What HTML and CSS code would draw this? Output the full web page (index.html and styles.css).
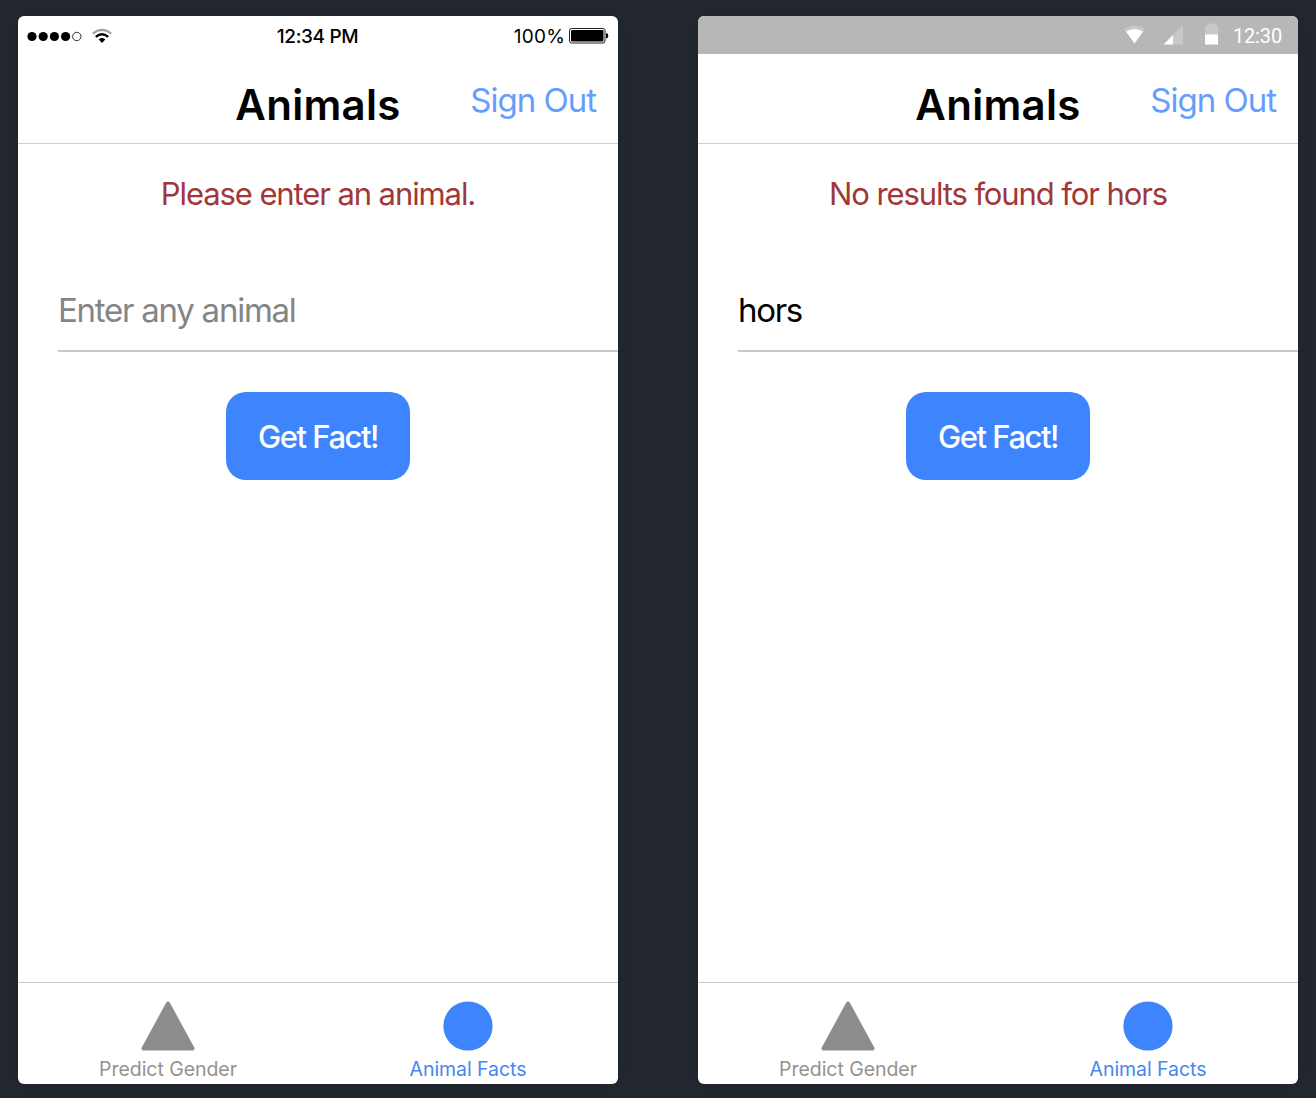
FILE: index.html
```html
<!DOCTYPE html>
<html lang="en">
<head>
<meta charset="utf-8">
<title>Animals</title>
<link rel="stylesheet" href="styles.css">
</head>
<body>
<main class="stage">
  <section class="phone">
    <div class="status status-ios">
      <svg class="signal" width="86" height="20" viewBox="0 0 86 20">
        <circle cx="5" cy="10.5" r="4.6"/><circle cx="16.2" cy="10.5" r="4.6"/><circle cx="27.4" cy="10.5" r="4.6"/><circle cx="38.6" cy="10.5" r="4.6"/>
        <circle cx="49.8" cy="10.5" r="4.2" fill="#fff" stroke="#000" stroke-width=".8"/>
        <path d="M65.8 7.6Q75 .2 84.2 7.6" fill="none" stroke="#a0a0a0" stroke-width="2.2"/>
        <path d="M68.8 10.8Q75 5.6 81.2 10.8" fill="none" stroke="#000" stroke-width="2.4"/>
        <path d="M71.7 13.5Q75 10.6 78.3 13.5L75 16.9Z"/>
      </svg>
      <span class="clock">12:34 PM</span>
      <span class="power"><span class="percent">100%</span>
        <svg width="40" height="16" viewBox="0 0 40 16">
          <rect x=".5" y=".5" width="35.5" height="14.5" rx="2" fill="#fff" stroke="#222"/>
          <rect x="2" y="2" width="32.5" height="11.5" rx="1"/>
          <path d="M37 5Q39.3 5.3 39.3 7.8T37 10.5Z"/>
        </svg>
      </span>
    </div>
    <header class="header"><h1 class="title">Animals</h1><a class="signout">Sign Out</a></header>
    <div class="content">
      <p class="message">Please enter an animal.</p>
      <div class="field placeholder">Enter any animal</div>
      <button class="submit">Get Fact!</button>
    </div>
    <nav class="tabs">
      <a class="tab"><svg width="54" height="50" viewBox="0 0 54 50"><path d="M27 2.5L51.5 47.5H2.5Z" fill="#8c8c8c" stroke="#8c8c8c" stroke-width="4" stroke-linejoin="round"/></svg><span>Predict Gender</span></a>
      <a class="tab active"><svg width="54" height="50" viewBox="0 0 54 50"><circle cx="27" cy="25" r="24.6" fill="#3e84fd"/></svg><span>Animal Facts</span></a>
    </nav>
  </section>
  <section class="phone">
    <div class="status status-android">
      <svg width="96" height="22" viewBox="0 0 96 22">
        <path d="M0 4Q10.5-3 21 4L10.5 18.5Z" fill="#c8c8c8"/><path d="M2 6.4Q10.5 1.4 19 6.4L10.5 18.5Z" fill="#fff"/>
        <path d="M39.5 19.5H59V0Z" fill="#c8c8c8"/><path d="M39.5 19.5H49V10Z" fill="#fff"/>
        <path d="M81 19.5V2Q81 0 83 0H84.5V-1.5H90.5V0H92Q94 0 94 2V19.5Z" fill="#c8c8c8"/><path d="M81 9.5H94V19.5H81Z" fill="#fff"/>
      </svg>
      <span class="android-clock">12:30</span>
    </div>
    <header class="header"><h1 class="title">Animals</h1><a class="signout">Sign Out</a></header>
    <div class="content">
      <p class="message">No results found for hors</p>
      <div class="field value">hors</div>
      <button class="submit">Get Fact!</button>
    </div>
    <nav class="tabs">
      <a class="tab"><svg width="54" height="50" viewBox="0 0 54 50"><path d="M27 2.5L51.5 47.5H2.5Z" fill="#8c8c8c" stroke="#8c8c8c" stroke-width="4" stroke-linejoin="round"/></svg><span>Predict Gender</span></a>
      <a class="tab active"><svg width="54" height="50" viewBox="0 0 54 50"><circle cx="27" cy="25" r="24.6" fill="#3e84fd"/></svg><span>Animal Facts</span></a>
    </nav>
  </section>
</main>
</body>
</html>
```
FILE: styles.css
```css
* { box-sizing: border-box; }
body { margin: 0; background: #232830; font-family: Inter, sans-serif; color: #000; }
.stage { display: flex; gap: 80px; padding: 16px 18px 14px; height: 1098px; }
.phone { width: 600px; height: 1068px; display: flex; flex-direction: column; background: #fff; border-radius: 6px; overflow: hidden; box-shadow: 0 0 30px rgba(0, 0, 0, .13); white-space: nowrap; }
.status { height: 38px; flex: none; display: grid; align-items: center; }
.status svg { display: block; overflow: visible; }
.status-ios { grid-template-columns: 1fr auto 1fr; padding: 2px 9px 0; font-size: 19px; line-height: 24px; }
.clock { font-weight: 500; letter-spacing: -.35px; margin-right: 1px; padding-top: 1px; }
.power { display: flex; justify-content: flex-end; align-items: center; gap: 4px; }
.percent { letter-spacing: .2px; padding-top: 2px; }
.status-android { display: flex; justify-content: flex-end; gap: 13px; padding: 2px 16px 0 0; background: #b7b7b7; color: #fff; }
.android-clock { font: 20px/24px Roboto, sans-serif; letter-spacing: -.15px; }
.header { height: 90px; flex: none; display: grid; grid-template-columns: 1fr auto 1fr; border-bottom: 1px solid #cecece; }
.title { grid-column: 2; margin: 29px 0 0; font-size: 42px; line-height: 44px; font-weight: 600; letter-spacing: .3px; }
.signout { justify-self: end; margin: 25px 22px 0 0; font-size: 33px; line-height: 42px; letter-spacing: -1px; color: #659dfd; }
.content { flex: 1; display: flex; flex-direction: column; align-items: center; }
.message { margin: 29px 0 0; font-size: 31px; line-height: 41px; letter-spacing: -1.1px; color: #a03739; }
.field { align-self: stretch; height: 80px; margin: 58px 0 0 40px; border-bottom: 2px solid #c7c7cc; font-size: 33px; line-height: 77px; }
.placeholder { letter-spacing: -1.25px; color: #858585; }
.value { letter-spacing: -1.3px; }
.submit { width: 184px; height: 88px; margin-top: 40px; padding: 2px 0 0; border: 0; border-radius: 20px; background: #3e84fd; color: #fff; font: 500 31px/40px Inter, sans-serif; letter-spacing: -1.5px; }
.tabs { height: 102px; flex: none; display: grid; grid-template-columns: 1fr 1fr; border-top: 1px solid #cacaca; }
.tab { display: flex; flex-direction: column; align-items: center; padding-top: 18px; gap: 6px; font-size: 19.5px; line-height: 24px; letter-spacing: -.05px; color: #929292; }
.active { color: #4686ef; }
```
